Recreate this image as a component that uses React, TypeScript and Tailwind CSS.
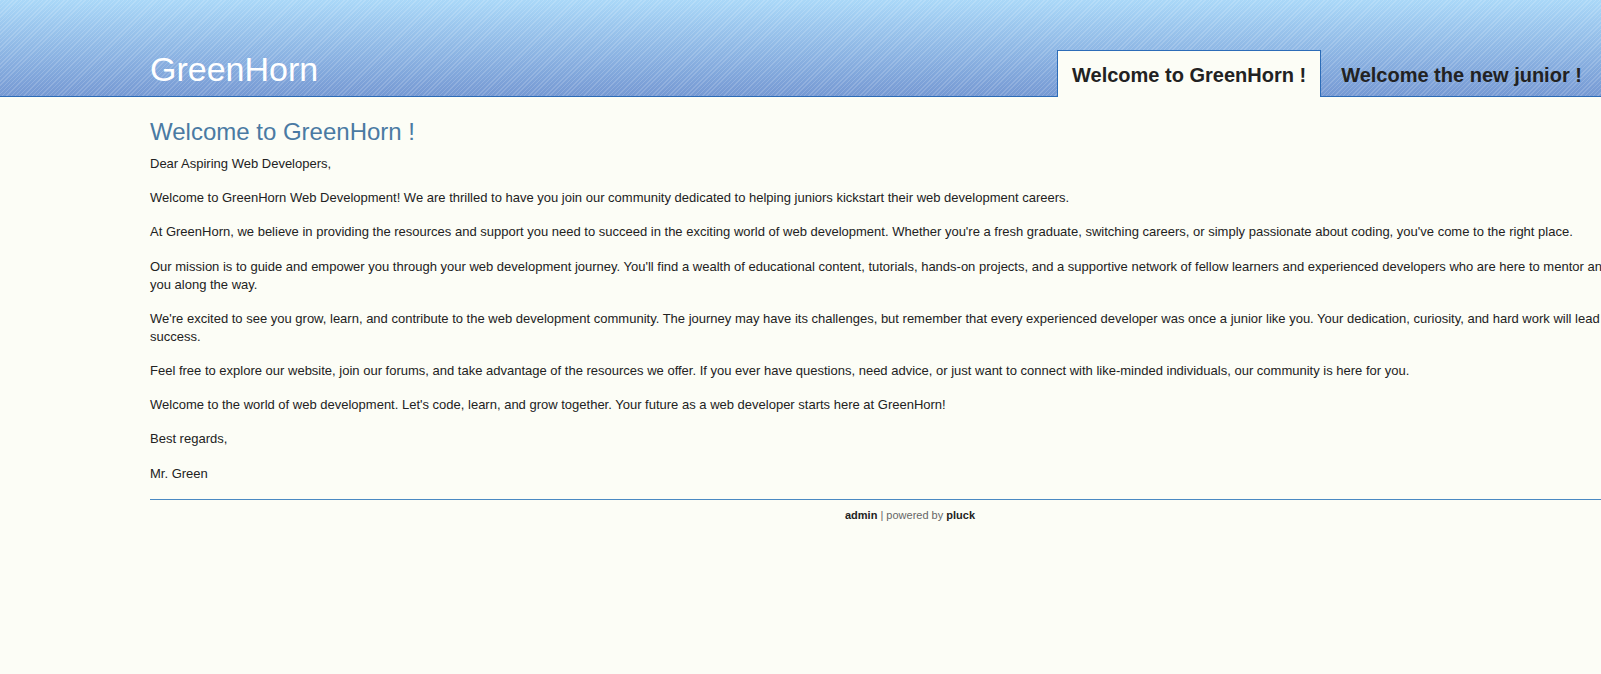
import React from 'react';

const paragraphs = [
  'Dear Aspiring Web Developers,',
  "Welcome to GreenHorn Web Development! We are thrilled to have you join our community dedicated to helping juniors kickstart their web development careers.",
  "At GreenHorn, we believe in providing the resources and support you need to succeed in the exciting world of web development. Whether you're a fresh graduate, switching careers, or simply passionate about coding, you've come to the right place.",
  "Our mission is to guide and empower you through your web development journey. You'll find a wealth of educational content, tutorials, hands-on projects, and a supportive network of fellow learners and experienced developers who are here to mentor and support you along the way.",
  "We're excited to see you grow, learn, and contribute to the web development community. The journey may have its challenges, but remember that every experienced developer was once a junior like you. Your dedication, curiosity, and hard work will lead you to success.",
  'Feel free to explore our website, join our forums, and take advantage of the resources we offer. If you ever have questions, need advice, or just want to connect with like-minded individuals, our community is here for you.',
  "Welcome to the world of web development. Let's code, learn, and grow together. Your future as a web developer starts here at GreenHorn!",
  'Best regards,',
  'Mr. Green',
];

const Header: React.FC = () => {
  return (
    <div className="h-[97px] border-b border-[#2c6cb8] bg-[repeating-linear-gradient(135deg,rgba(255,255,255,0.16)_0px,rgba(255,255,255,0.16)_1px,transparent_1px,transparent_3px),linear-gradient(#aad8f8,#7699d3)]">
      <div className="ml-[150px] flex w-[1554px]">
        <div className="w-[907px] shrink-0 pt-[52px]">
          <h1 className="text-[34px] leading-[34px] text-white">GreenHorn</h1>
        </div>
        <ul className="flex pt-[50px]">
          <li className="h-[47px] border border-b-0 border-[#2c6cb8] bg-[#fcfdf6] px-[14px] pt-[14px] text-[20px] font-bold leading-[20px] text-[#222]">
            Welcome to GreenHorn !
          </li>
          <li className="ml-[4px] h-[47px] border border-transparent px-[15px] pt-[14px] text-[20px] font-bold leading-[20px] whitespace-nowrap text-[#222]">
            Welcome the new junior !
          </li>
        </ul>
      </div>
    </div>
  );
};

export default function App() {
  return (
    <div className="min-h-[674px] w-full overflow-hidden bg-[#fcfdf6] font-['Liberation_Sans',Arial,sans-serif]">
      <Header />
      <div className="ml-[150px] w-[1520px]">
        <h2 className="mt-[23px] mb-[11px] text-[24px] leading-[24px] text-[#4a7aa3]">Welcome to GreenHorn !</h2>
        {paragraphs.map((p, i) => (
          <p key={i} className="mb-[16.2px] text-[13px] leading-[18px] text-[#222]">
            {p}
          </p>
        ))}
        <div className="border-t border-[#4a89c2]" />
        <div className="pt-[9px] text-center text-[11px] leading-[13px] text-[#666]">
          <b className="text-[#222]">admin</b> | powered by <b className="text-[#222]">pluck</b>
        </div>
      </div>
    </div>
  );
}
